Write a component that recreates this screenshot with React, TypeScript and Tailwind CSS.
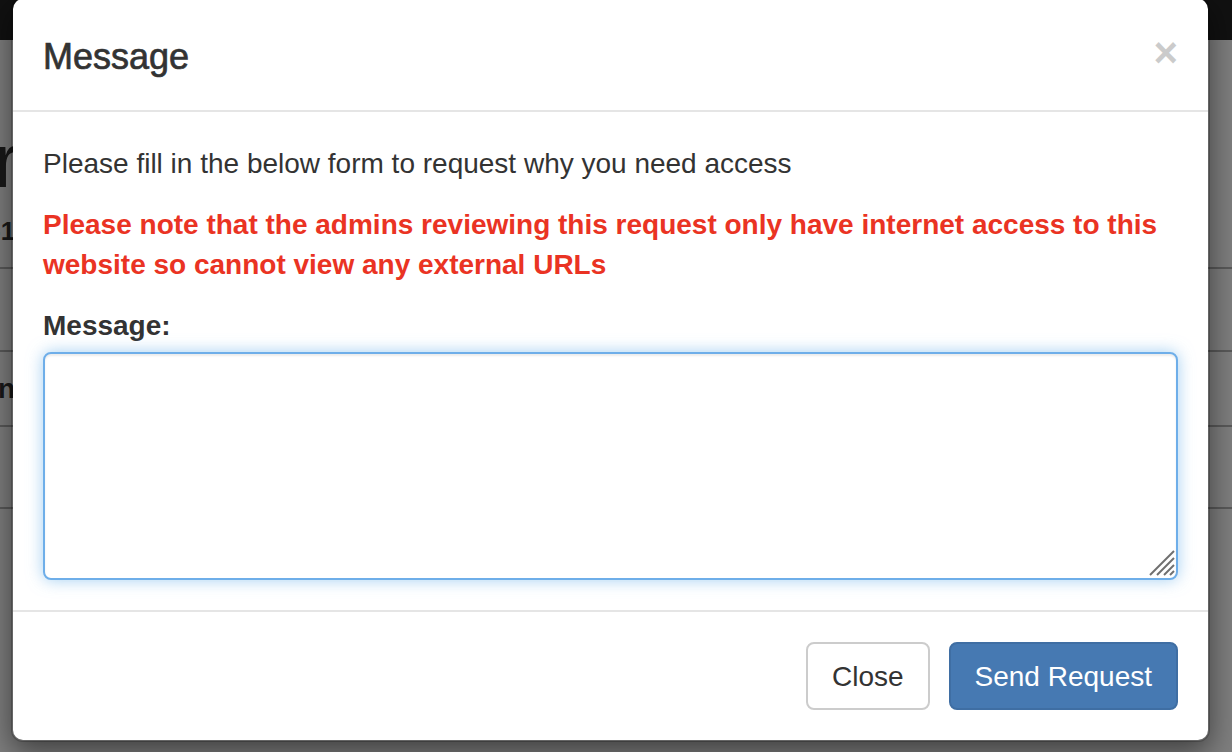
function BackgroundPage() {
  return (
    <div className="flex flex-col">
      <div className="h-[40px] bg-[#222]" />
      <div className="h-[227px] pt-[83px]">
        <h1 className="-ml-[6px] text-[76px] leading-none">r</h1>
        <div className="mt-[19px] -ml-[8px] text-[26px] font-bold leading-none">-1</div>
      </div>
      <div className="h-[83px] border-t-2 border-[#b4b4b4]" />
      <div className="flex h-[75px] items-center border-t-2 border-[#b4b4b4]">
        <span className="-ml-[2px] text-[28px] font-bold leading-[40px]">n</span>
      </div>
      <div className="h-[82px] border-t-2 border-[#b4b4b4]" />
      <div className="h-[120px] border-t-2 border-[#b4b4b4]" />
    </div>
  );
}

function ResizeGrip() {
  return (
    <svg
      className="pointer-events-none absolute bottom-[4px] right-[3px]"
      width="26"
      height="26"
      viewBox="0 0 26 26"
    >
      <g stroke="#6f6f6f" strokeWidth="2" strokeLinecap="butt">
        <line x1="1" y1="25" x2="25" y2="1" />
        <line x1="8" y1="25" x2="25" y2="8" />
        <line x1="15" y1="25" x2="25" y2="15" />
        <line x1="21" y1="25" x2="25" y2="21" />
      </g>
    </svg>
  );
}

function Modal() {
  return (
    <div className="absolute left-[11px] top-[-3px] w-[1199px] rounded-[12px] border-2 border-black/20 bg-white bg-clip-padding shadow-[0_10px_30px_rgba(0,0,0,0.5)]">
      <div className="flex items-start justify-between border-b-2 border-[#e5e5e5] p-[30px]">
        <h4 className="relative top-[2px] text-[36px] font-medium leading-[51px] text-[#333] [-webkit-text-stroke:0.7px_#333]">
          Message
        </h4>
        <button className="mt-[3px] text-[42px] font-bold leading-none text-black opacity-20">
          ×
        </button>
      </div>

      <div className="px-[30px] pb-[30px] pt-[32px]">
        <p className="mb-[21px] text-[28px] leading-[40px] text-[#333]">
          Please fill in the below form to request why you need access
        </p>
        <p className="mb-[21px] text-[28px] font-bold leading-[40px] text-[#ea3323]">
          Please note that the admins reviewing this request only have internet access to this
          website so cannot view any external URLs
        </p>
        <label className="mb-[6px] block text-[28px] font-bold leading-[40px] text-[#333]">
          Message:
        </label>
        <div className="relative">
          <textarea className="block h-[228px] w-full resize-none rounded-[8px] border-2 border-[#6eaee9] bg-white px-[24px] py-[12px] text-[28px] shadow-[inset_0_2px_2px_rgba(0,0,0,0.075),0_0_16px_rgba(102,175,233,0.6)] outline-none" />
          <ResizeGrip />
        </div>
      </div>

      <div className="flex justify-end gap-[19px] border-t-2 border-[#e5e5e5] p-[30px]">
        <button className="rounded-[8px] border-2 border-[#cccccc] bg-white px-[24px] pb-[11px] pt-[13px] text-[28px] leading-[40px] text-[#333]">
          Close
        </button>
        <button className="rounded-[8px] border-2 border-[#3f6ea3] bg-[#4679b2] px-[24px] pb-[11px] pt-[13px] text-[28px] leading-[40px] text-white">
          Send Request
        </button>
      </div>
    </div>
  );
}

export default function App() {
  return (
    <div className="relative h-[752px] w-full overflow-hidden bg-white font-['Liberation_Sans',Arial,sans-serif] text-[#333]">
      <BackgroundPage />
      <div className="absolute inset-0 bg-black/50" />
      <Modal />
    </div>
  );
}
